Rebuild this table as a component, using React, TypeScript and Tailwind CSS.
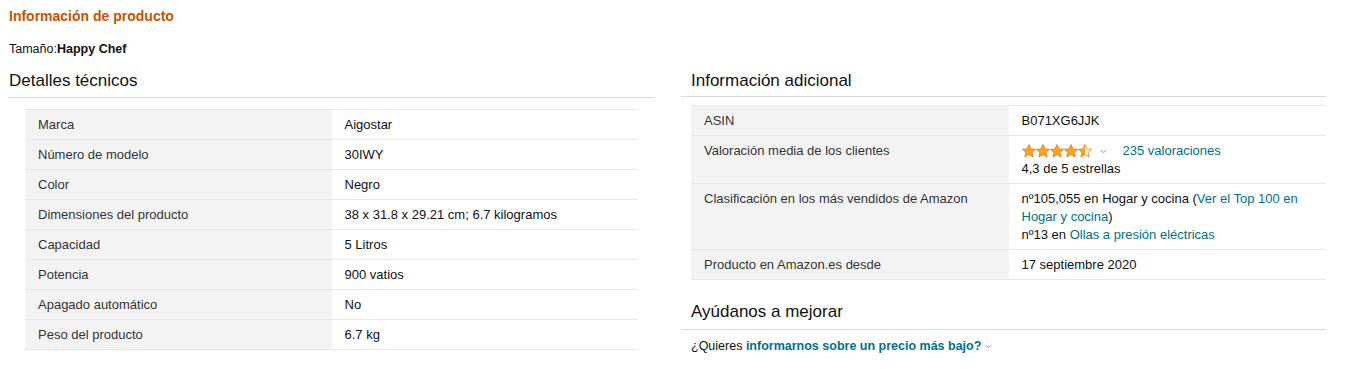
import React from "react"

type Row = { label: string; value: React.ReactNode }

const font = { fontFamily: '"Liberation Sans", Arial, sans-serif' }

function Star({ fill }: { fill: "full" | "half" }) {
  const pts = "7,0.6 9,4.9 13.6,5.3 10.1,8.4 11.1,13 7,10.6 2.9,13 3.9,8.4 0.4,5.3 5,4.9"
  return (
    <svg width="14" height="14" viewBox="0 0 14 14" className="block">
      <defs>
        <linearGradient id="half" x1="0" x2="1" y1="0" y2="0">
          <stop offset="50%" stopColor="#ffa41c" />
          <stop offset="50%" stopColor="#ffffff" />
        </linearGradient>
      </defs>
      <polygon
        points={pts}
        fill={fill === "full" ? "#ffa41c" : "url(#half)"}
        stroke="#de7921"
        strokeWidth="0.8"
        strokeLinejoin="round"
      />
    </svg>
  )
}

function Chevron() {
  return (
    <svg width="7" height="5" viewBox="0 0 7 5" className="inline-block">
      <path d="M0.8 1 L3.5 3.8 L6.2 1" fill="none" stroke="#999" strokeWidth="1" />
    </svg>
  )
}

function SpecTable({ rows }: { rows: Row[] }) {
  return (
    <div className="border-b border-[#e7e7e7]">
      {rows.map((r, i) => (
        <div key={i} className="grid grid-cols-2 border-t border-[#e7e7e7] text-[13px] leading-[18px] text-[#333]">
          <div className="bg-[#f3f3f3] px-[13px] pt-[6px] pb-[5px]">{r.label}</div>
          <div className="px-[13px] pt-[6px] pb-[5px] text-[#0f1111]">{r.value}</div>
        </div>
      ))}
    </div>
  )
}

const link = "text-[#007185]"

export default function App() {
  const tech: Row[] = [
    { label: "Marca", value: "Aigostar" },
    { label: "Número de modelo", value: "30IWY" },
    { label: "Color", value: "Negro" },
    { label: "Dimensiones del producto", value: "38 x 31.8 x 29.21 cm; 6.7 kilogramos" },
    { label: "Capacidad", value: "5 Litros" },
    { label: "Potencia", value: "900 vatios" },
    { label: "Apagado automático", value: "No" },
    { label: "Peso del producto", value: "6.7 kg" },
  ]

  const extra: Row[] = [
    { label: "ASIN", value: "B071XG6JJK" },
    {
      label: "Valoración media de los clientes",
      value: (
        <>
          <div className="flex items-center">
            <div className="flex">
              <Star fill="full" />
              <Star fill="full" />
              <Star fill="full" />
              <Star fill="full" />
              <Star fill="half" />
            </div>
            <span className="ml-[8px] flex">
              <Chevron />
            </span>
            <span className={`${link} ml-[16px]`}>235 valoraciones</span>
          </div>
          <div>4,3 de 5 estrellas</div>
        </>
      ),
    },
    {
      label: "Clasificación en los más vendidos de Amazon",
      value: (
        <>
          <div>
            nº105,055 en Hogar y cocina (<span className={link}>Ver el Top 100 en Hogar y cocina</span>)
          </div>
          <div>
            nº13 en <span className={link}>Ollas a presión eléctricas</span>
          </div>
        </>
      ),
    },
    { label: "Producto en Amazon.es desde", value: "17 septiembre 2020" },
  ]

  return (
    <div className="min-h-[369px] bg-white pt-[7px] pl-[8px] text-[#0f1111]" style={font}>
      <div className="pl-px text-[14px] font-bold leading-[18px] text-[#c45500]">Información de producto</div>
      <div className="mt-[15px] pl-px text-[12.5px] leading-[18px]">
        Tamaño:<span className="font-bold">Happy Chef</span>
      </div>

      <div className="mt-[9px] grid grid-cols-[647px_645px] gap-[26px]">
        {/* left column */}
        <div>
          <h2 className="border-b border-[#d5d9d9] pt-[2px] pb-[4px] pl-px text-[17px] leading-[24px]">Detalles técnicos</h2>
          <div className="mx-[17px] mt-[11px]">
            <SpecTable rows={tech} />
          </div>
        </div>

        {/* right column */}
        <div>
          <h2 className="border-b border-[#d5d9d9] pt-[2px] pb-[3px] pl-[10px] text-[17px] leading-[24px]">Información adicional</h2>
          <div className="mt-[8px] pl-[10px]">
            <SpecTable rows={extra} />
          </div>
          <h2 className="mt-[20px] border-b border-[#d5d9d9] pb-[5px] pl-[10px] text-[17px] leading-[24px]">Ayúdanos a mejorar</h2>
          <div className="mt-[7px] flex items-center pl-[10px] text-[12.5px] leading-[18px]">
            <span>¿Quieres&nbsp;</span>
            <span className="font-bold text-[#007185]">informarnos sobre un precio más bajo?</span>
            <span className="ml-[4px] flex">
              <Chevron />
            </span>
          </div>
        </div>
      </div>
    </div>
  )
}
